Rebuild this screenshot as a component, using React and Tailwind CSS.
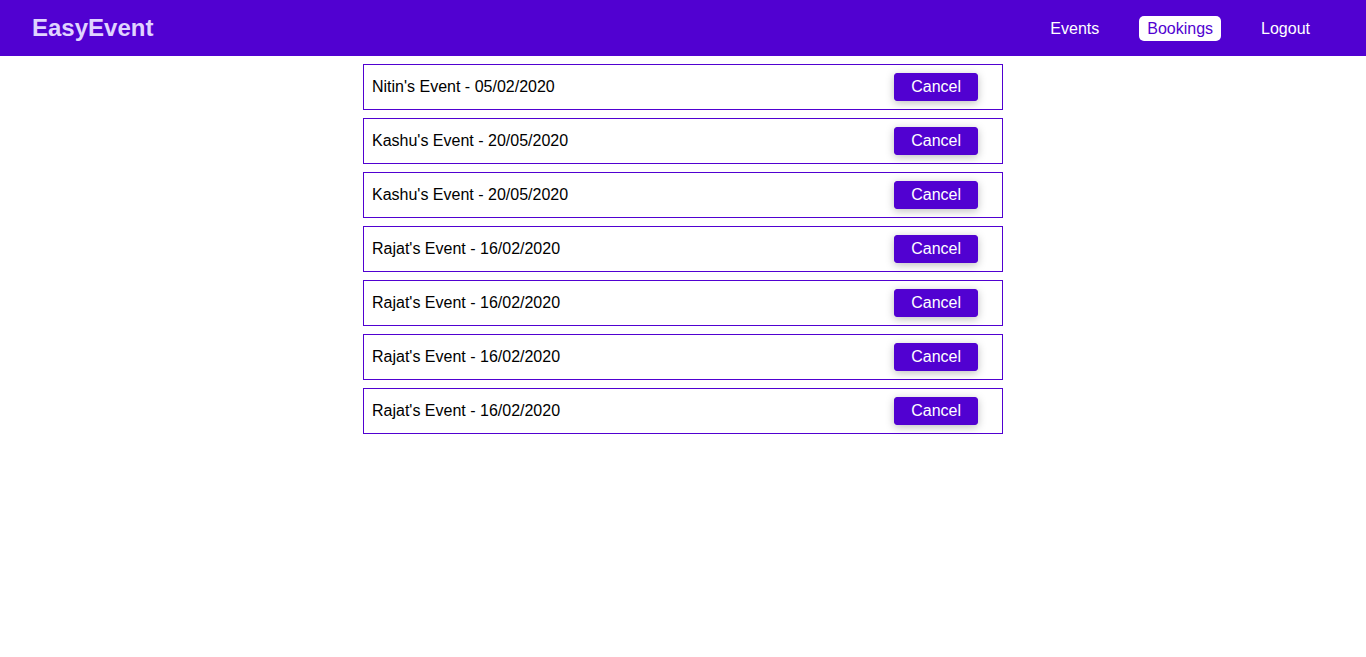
const bookings = [
  { id: 1, title: "Nitin's Event", date: '05/02/2020' },
  { id: 2, title: "Kashu's Event", date: '20/05/2020' },
  { id: 3, title: "Kashu's Event", date: '20/05/2020' },
  { id: 4, title: "Rajat's Event", date: '16/02/2020' },
  { id: 5, title: "Rajat's Event", date: '16/02/2020' },
  { id: 6, title: "Rajat's Event", date: '16/02/2020' },
  { id: 7, title: "Rajat's Event", date: '16/02/2020' },
];

function MainNavigation() {
  return (
    <header className="h-14 w-full bg-[#5101d1] flex items-center px-8">
      <div className="flex-1">
        <h1 className="m-0 text-2xl leading-[28px] font-bold text-[#e0d4ff]">EasyEvent</h1>
      </div>
      <nav>
        <ul className="flex items-center m-0 p-0 list-none">
          <li className="mx-4">
            <a href="#" className="block px-2 py-1 leading-[17px] rounded-[5px] text-white">Events</a>
          </li>
          <li className="mx-4">
            <a href="#" className="block px-2 py-1 leading-[17px] rounded-[5px] bg-white text-[#5101d1]">Bookings</a>
          </li>
          <li className="mx-4">
            <button className="block px-2 py-1 leading-[17px] rounded-[5px] text-white">Logout</button>
          </li>
        </ul>
      </nav>
    </header>
  );
}

function BookingList({ items }) {
  return (
    <ul className="w-[640px] mx-auto p-0 list-none">
      {items.map((b) => (
        <li key={b.id} className="my-2 p-2 border border-[#5101d1] flex justify-between items-center">
          <div>{b.title} - {b.date}</div>
          <div>
            <button className="mr-4 px-4 py-1 bg-[#5101d1] border border-[#5101d1] rounded-[3px] text-white shadow-[0_2px_8px_rgba(0,0,0,0.26)]">
              Cancel
            </button>
          </div>
        </li>
      ))}
    </ul>
  );
}

export default function App() {
  return (
    <div className="min-h-[657px] bg-white text-black text-base leading-[18px]" style={{ fontFamily: '"Liberation Sans", Arial, sans-serif' }}>
      <MainNavigation />
      <main>
        <BookingList items={bookings} />
      </main>
    </div>
  );
}
